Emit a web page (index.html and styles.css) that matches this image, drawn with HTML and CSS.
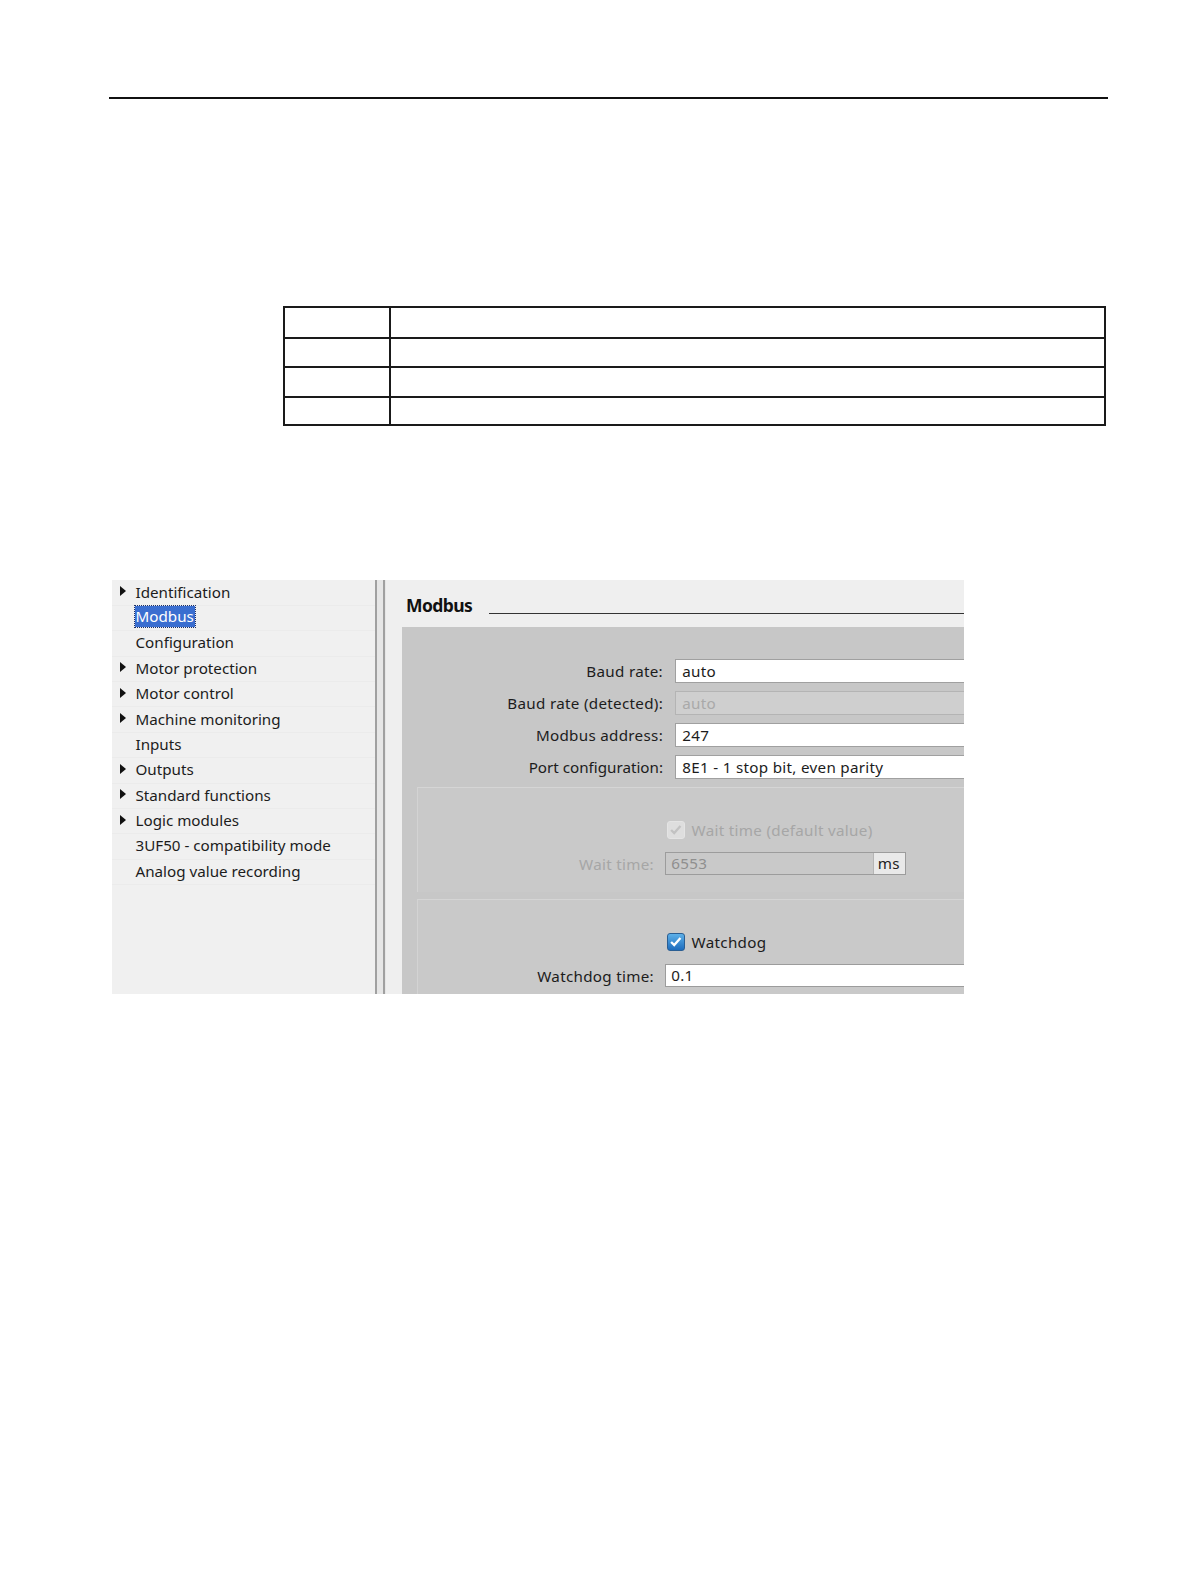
FILE: index.html
```html
<!DOCTYPE html>
<html>
<head>
<meta charset="utf-8">
<link rel="stylesheet" href="styles.css">
</head>
<body>
<div class="rule"></div>

<table class="doc-table">
  <tr class="r1"><td class="c1"></td><td></td></tr>
  <tr class="r2"><td class="c1"></td><td></td></tr>
  <tr class="r3"><td class="c1"></td><td></td></tr>
  <tr class="r4"><td class="c1"></td><td></td></tr>
</table>

<div class="shot">
  <div class="nav">
    <div class="item"><span class="tri"></span>Identification</div>
    <div class="item"><span class="notri"></span><span class="sel">Modbus</span></div>
    <div class="item"><span class="notri"></span>Configuration</div>
    <div class="item"><span class="tri"></span>Motor protection</div>
    <div class="item"><span class="tri"></span>Motor control</div>
    <div class="item"><span class="tri"></span>Machine monitoring</div>
    <div class="item"><span class="notri"></span>Inputs</div>
    <div class="item"><span class="tri"></span>Outputs</div>
    <div class="item"><span class="tri"></span>Standard functions</div>
    <div class="item"><span class="tri"></span>Logic modules</div>
    <div class="item"><span class="notri"></span>3UF50 - compatibility mode</div>
    <div class="item"><span class="notri"></span>Analog value recording</div>
  </div>
  <div class="splitter"><div class="sp-line"></div><div class="sp-line"></div></div>
  <div class="main">
    <div class="title-row"><span class="title">Modbus</span><span class="title-line"></span></div>
    <div class="group">
      <div class="frow"><label class="lbl">Baud rate:</label><div class="inp">auto</div></div>
      <div class="frow"><label class="lbl">Baud rate (detected):</label><div class="inp dis">auto</div></div>
      <div class="frow"><label class="lbl">Modbus address:</label><div class="inp">247</div></div>
      <div class="frow"><label class="lbl lbl-tight">Port configuration:</label><div class="inp">8E1 - 1 stop bit, even parity</div></div>

      <div class="sub sub1">
        <div class="crow"><span class="cb cb-dis"><svg viewBox="0 0 18 18" width="16" height="16"><path d="M3.5 9 L7 12.5 L14 4.5" fill="none" stroke="#c2c2c2" stroke-width="2.6"/></svg></span><span class="cb-lbl dim">Wait time (default value)</span></div>
        <div class="srow"><label class="slbl dim">Wait time:</label><div class="sinp dis"><span>6553</span><span class="unit">ms</span></div></div>
      </div>

      <div class="sub sub2">
        <div class="crow"><span class="cb cb-on"><svg viewBox="0 0 18 18" width="16" height="16"><path d="M3.5 9 L7 12.5 L14 4.5" fill="none" stroke="#ffffff" stroke-width="2.6"/></svg></span><span class="cb-lbl">Watchdog</span></div>
        <div class="srow"><label class="slbl">Watchdog time:</label><div class="sinp wide">0.1</div></div>
      </div>
    </div>
  </div>
</div>
</body>
</html>
```

FILE: styles.css
```css
html, body {
  margin: 0;
  padding: 0;
  background: #ffffff;
}
body {
  font-family: "Noto Sans", "DejaVu Sans", sans-serif;
  width: 1191px;
  height: 1587px;
  overflow: hidden;
}
.rule {
  margin: 97px 83px 0 109px;
  height: 2px;
  background: #111;
}

.doc-table {
  margin: 207px 0 0 283px;
  width: 823px;
  border-collapse: collapse;
}
.doc-table td {
  border: 2px solid #1a1a1a;
  padding: 0;
}
.doc-table .c1 { width: 104px; }
.doc-table .r1 td { height: 29.4px; }
.doc-table .r2 td { height: 26.3px; }
.doc-table .r3 td { height: 28.4px; }
.doc-table .r4 td { height: 26.3px; }

.shot {
  margin: 154px 0 0 112px;
  width: 852px;
  height: 414px;
  display: flex;
  overflow: hidden;
  background: #efefef;
  color: #1c1c1c;
  font-size: 15.2px;
}

/* navigation */
.nav {
  width: 263px;
  flex: none;
  background: #f0f0f0;
}
.item {
  height: 25.4px;
  display: flex;
  align-items: center;
  padding-bottom: 2px;
  border-bottom: 1px solid #ebebeb;
  box-sizing: border-box;
  white-space: nowrap;
}
.tri, .notri {
  width: 23.5px;
  flex: none;
  display: inline-block;
}
.tri {
  position: relative;
  height: 11px;
}
.tri::before {
  content: "";
  position: absolute;
  left: 7.5px;
  top: 0;
  border-left: 6px solid #111;
  border-top: 5.5px solid transparent;
  border-bottom: 5.5px solid transparent;
}
.sel {
  background: #3a6ed0;
  color: #fff;
  outline: 1px dotted #1c2f66;
  padding: 0 1px 1px;
  margin-left: -1px;
}

/* splitter */
.splitter {
  width: 11px;
  flex: none;
  display: flex;
  justify-content: space-between;
  padding-right: 1px;
  box-sizing: border-box;
  background: #e6e6e6;
}
.sp-line {
  width: 2px;
  background: #a0a0a0;
}

/* main */
.main {
  flex: 1;
  background: #efefef;
  padding: 14px 0 0 16px;
  min-width: 0;
}
.title-row {
  display: flex;
  align-items: flex-end;
  height: 23px;
  padding-left: 4px;
}
.title {
  font-weight: bold;
  font-size: 17.5px;
  letter-spacing: -0.6px;
  color: #111;
  line-height: 23px;
}
.title-line {
  flex: 1;
  height: 1px;
  background: #333;
  margin: 0 0 3px 17px;
}
.group {
  margin-top: 9.5px;
  background: #c7c7c7;
  padding: 32.5px 0 0 0;
  height: 400px;
  width: 640px;
}
.frow {
  display: flex;
  align-items: center;
  height: 24px;
  margin-bottom: 8px;
  letter-spacing: 0.3px;
}
.lbl {
  width: 261px;
  text-align: right;
  flex: none;
  white-space: nowrap;
  margin-right: 12.3px;
}
.lbl-tight {
  letter-spacing: 0;
}
.inp {
  flex: 1;
  height: 24px;
  box-sizing: border-box;
  background: #fff;
  border: 1px solid #a0a0a0;
  padding-left: 6px;
  line-height: 22px;
  white-space: nowrap;
}
.inp.dis {
  background: #cfcfcf;
  color: #a9a9a9;
  border-color: #b4b4b4;
}

.sub {
  margin-left: 15.2px;
  background: #c9c9c9;
  border-top: 1px solid #d5d5d5;
  border-left: 1px solid #d3d3d3;
  box-sizing: border-box;
}
.sub1 {
  margin-top: 1.3px;
  height: 105px;
  padding-top: 32.4px;
}
.sub2 {
  margin-top: 7px;
  height: 120px;
  padding-top: 32.4px;
}
.crow {
  display: flex;
  align-items: center;
  height: 18px;
  padding-left: 249px;
  letter-spacing: 0.3px;
}
.cb {
  width: 18px;
  height: 18px;
  box-sizing: border-box;
  border-radius: 3px;
  display: inline-flex;
  align-items: center;
  justify-content: center;
  flex: none;
}
.cb svg { display: block; }
.cb-dis {
  background: #dedede;
  border: 1px solid #e4e4e4;
}
.cb-on {
  background: linear-gradient(#5db0e8, #1d6cbd);
  border: 1px solid #2a5e93;
}
.cb-lbl {
  margin-left: 6.4px;
}
.dim { color: #a6a6a6; }
.srow {
  display: flex;
  align-items: center;
  height: 23px;
  margin-top: 13.3px;
  letter-spacing: 0.3px;
}
.slbl {
  width: 235.8px;
  flex: none;
  text-align: right;
  margin-right: 11.2px;
  white-space: nowrap;
}
.sinp {
  width: 241px;
  height: 23px;
  box-sizing: border-box;
  border: 1px solid #9c9c9c;
  padding-left: 5px;
  line-height: 21px;
  display: flex;
  justify-content: space-between;
}
.sinp.dis {
  background: #c9c9c9;
  color: #8f8f8f;
}
.unit {
  width: 32.4px;
  background: #e9e9e9;
  color: #222;
  border-left: 1px solid #b5b5b5;
  padding-left: 4px;
  box-sizing: border-box;
}
.sinp.wide {
  width: 330px;
  background: #fff;
  color: #1c1c1c;
}
```
